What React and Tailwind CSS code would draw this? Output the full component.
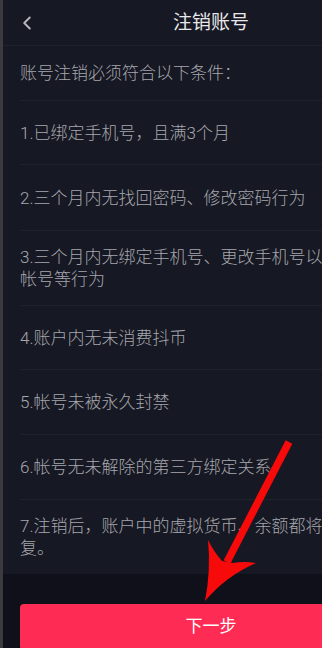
import { ChevronLeft } from 'lucide-react'

const rows = [
  { lines: ['1.已绑定手机号，且满3个月'], h: 'h-[64px]' },
  { lines: ['2.三个月内无找回密码、修改密码行为'], h: 'h-[66px]' },
  { lines: ['3.三个月内无绑定手机号、更改手机号以及', '帐号等行为'], h: 'h-[75px]' },
  { lines: ['4.账户内无未消费抖币'], h: 'h-[64px]' },
  { lines: ['5.帐号未被永久封禁'], h: 'h-[65px]' },
  { lines: ['6.帐号无未解除的第三方绑定关系'], h: 'h-[65px]' },
  { lines: ['7.注销后，账户中的虚拟货币、余额都将作废且无法恢', '复。'], h: 'h-[74px]', last: true },
]

export default function App() {
  return (
    <div
      className="relative w-[322px] h-[648px] overflow-hidden flex bg-[#161823]"
      style={{ fontFamily: 'Roboto, "Noto Sans CJK SC", "Noto Sans", sans-serif' }}
    >
      <div className="w-[3px] shrink-0 bg-[#3b3b3e]" />
      <div className="w-[416px] shrink-0 flex flex-col">
        <header className="h-[46px] shrink-0 grid grid-cols-[1fr_auto_1fr] items-center border-b border-[#1f212c]">
          <div className="pl-[13px] flex items-center">
            <ChevronLeft size={22} strokeWidth={2.2} className="text-[#b4b5ba]" />
          </div>
          <h1 className="text-[19px] leading-none text-[#e8e8ea] font-normal">注销账号</h1>
          <div />
        </header>

        <div className="ml-[17px] h-[55px] shrink-0 flex items-center border-b border-[#1f212c] text-[17px] leading-[22px] font-light text-[#a6a7ad]">
          账号注销必须符合以下条件：
        </div>

        {rows.map((r) => (
          <div
            key={r.lines[0]}
            className={`ml-[17px] ${r.h} shrink-0 flex flex-col justify-center text-[17px] leading-[22px] font-light text-[#a6a7ad] whitespace-nowrap ${r.last ? '' : 'border-b border-[#1f212c]'}`}
          >
            {r.lines.map((l) => (
              <span key={l}>{l}</span>
            ))}
          </div>
        ))}

        <div className="flex-1 bg-[#0f1019] pt-[30px] px-[17px]">
          <button className="w-full h-[46px] rounded-[4px] bg-[#fe2c55] text-white text-[17px] flex items-center justify-center">
            下一步
          </button>
        </div>
      </div>

      <svg className="absolute inset-0 pointer-events-none" width="322" height="648" viewBox="0 0 322 648">
        <line x1="289" y1="442" x2="227" y2="562" stroke="#f70a0a" strokeWidth="7.5" />
        <path
          d="M208 540 Q214 552 222 561 L233 563 Q244 561 256 563 Q226 576 205 601 Q211 570 208 540 Z"
          fill="#f70a0a"
        />
      </svg>
    </div>
  )
}
